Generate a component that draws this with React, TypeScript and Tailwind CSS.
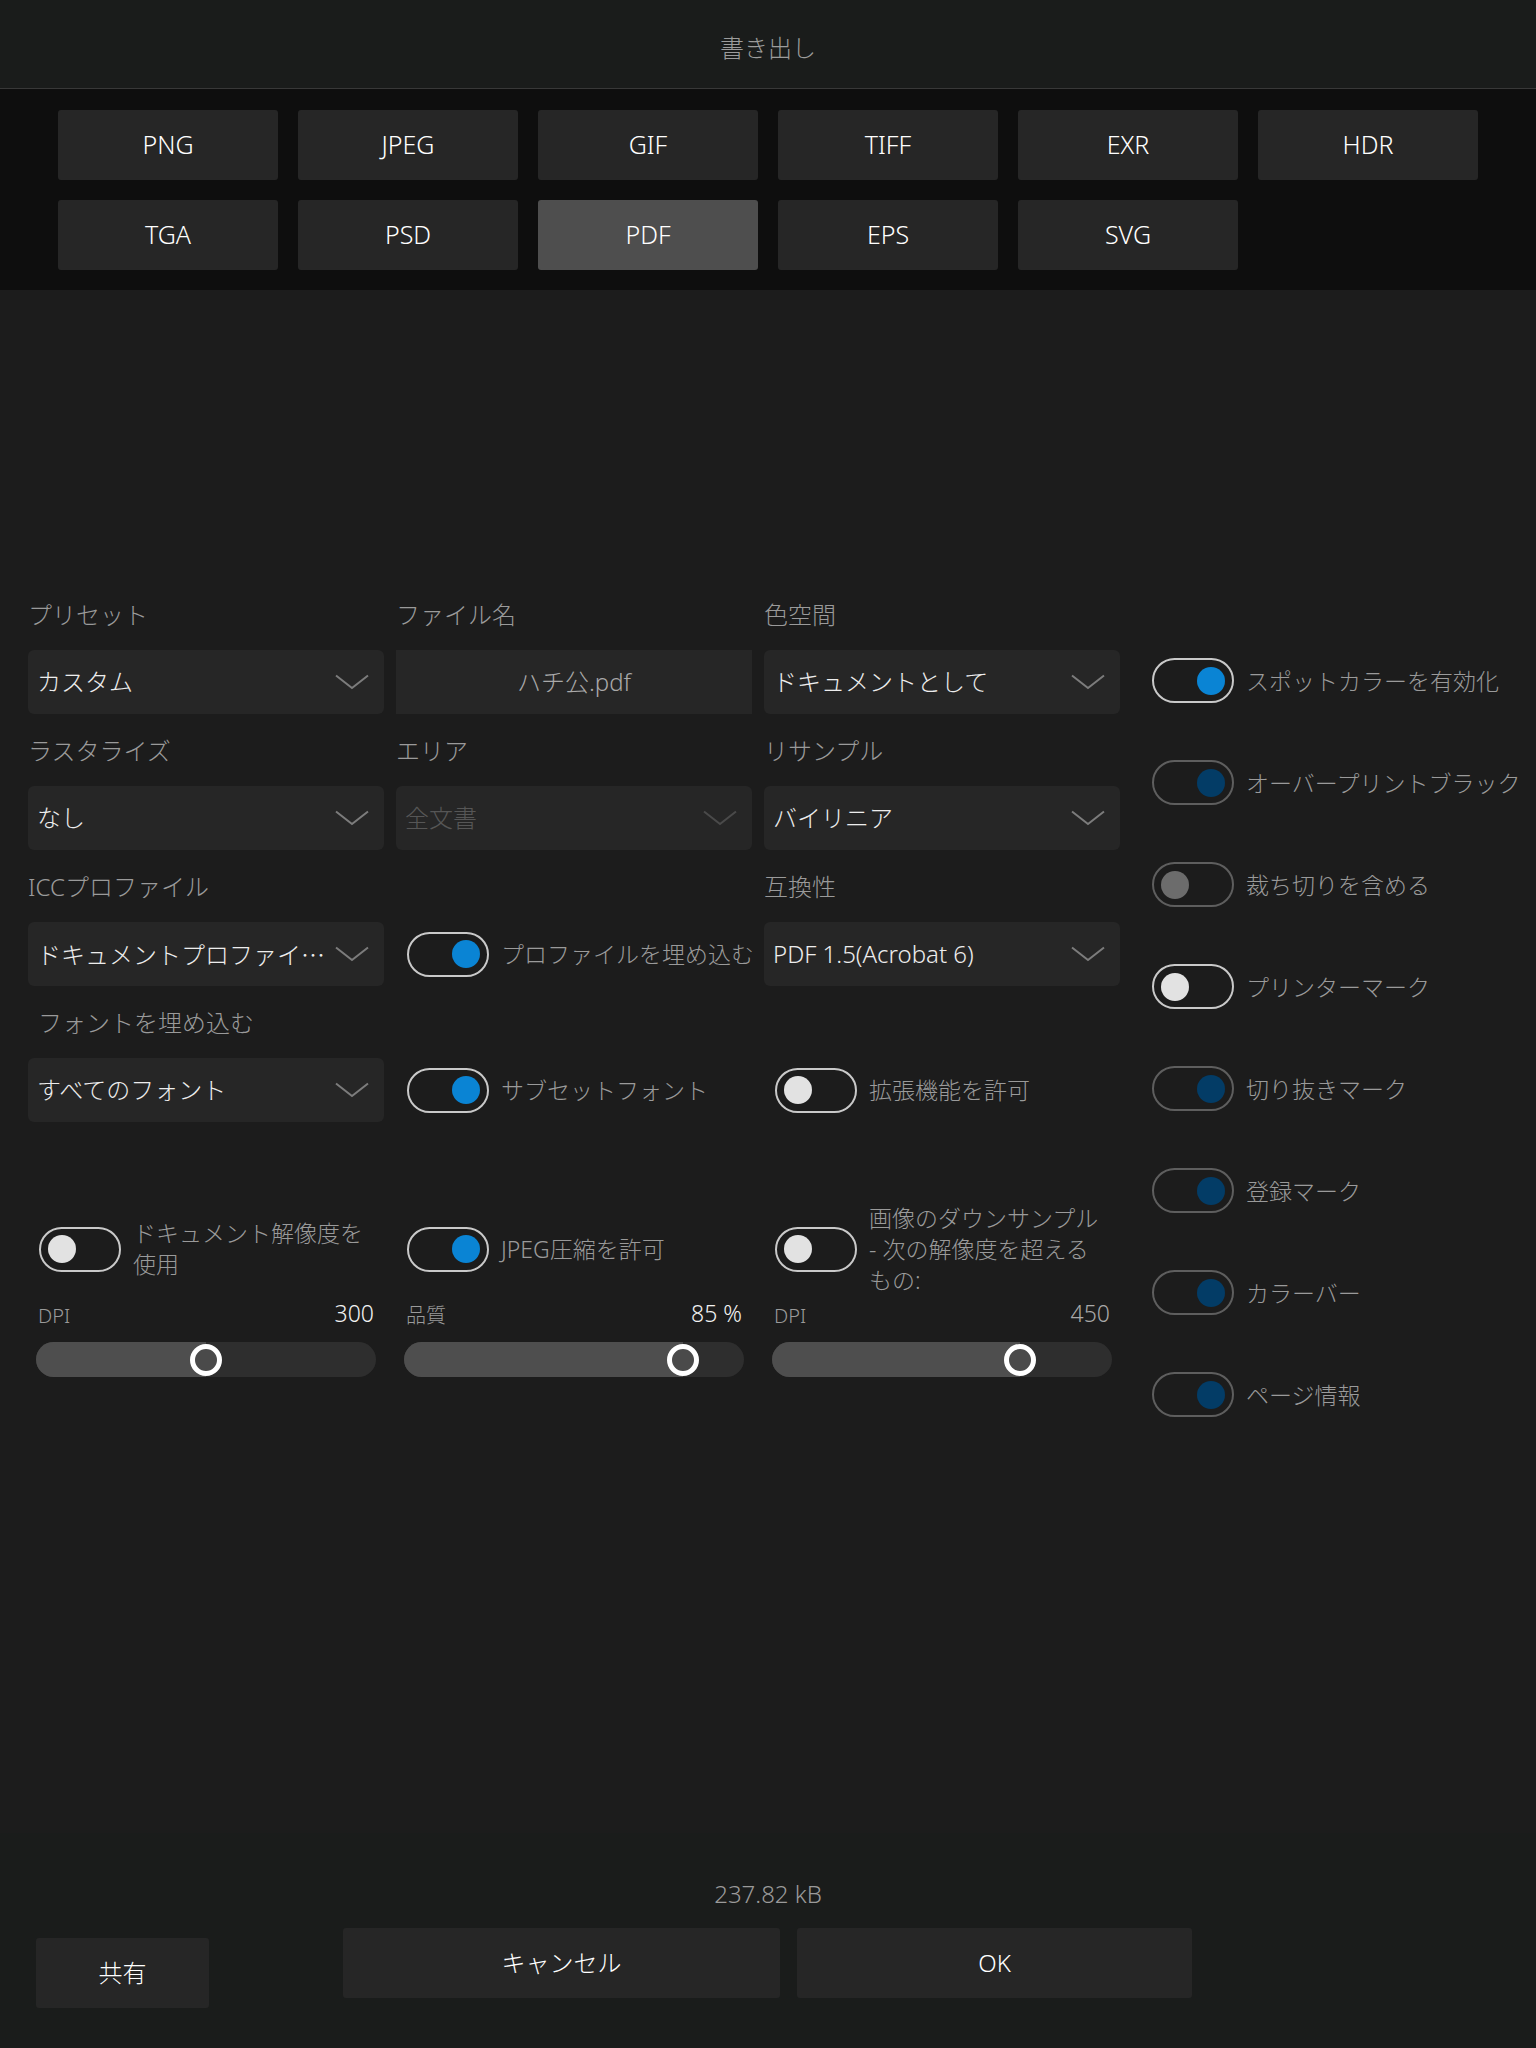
import React from "react";

const formats = ["PNG", "JPEG", "GIF", "TIFF", "EXR", "HDR", "TGA", "PSD", "PDF", "EPS", "SVG"];

// トグルの見た目: on/off と有効/無効
type ToggleState = "on" | "off" | "onDim" | "offDim";

const Toggle = ({ state }: { state: ToggleState }) => {
  const dim = state === "onDim" || state === "offDim";
  const on = state === "on" || state === "onDim";
  const knob =
    state === "on" ? "bg-[#0a84d4]" : state === "onDim" ? "bg-[#033c66]" : state === "off" ? "bg-[#e2e2e2]" : "bg-[#6c6c6c]";
  return (
    <div
      className={`w-[82px] h-[45px] shrink-0 rounded-full border-2 flex items-center px-[7px] ${
        dim ? "border-[#5e5e5e]" : "border-[#c9c9c9]"
      } ${on ? "justify-end" : "justify-start"}`}
    >
      <div className={`w-[28px] h-[28px] rounded-full ${knob}`} />
    </div>
  );
};

const Chevron = ({ dim }: { dim?: boolean }) => (
  <svg width="34" height="16" viewBox="0 0 34 16" fill="none" className="shrink-0">
    <path d="M1 1.5 L17 14 L33 1.5" stroke={dim ? "#4a4a4a" : "#7c7c7c"} strokeWidth="2" />
  </svg>
);

const Label = ({ text, indent }: { text?: string; indent?: boolean }) => (
  <div className={`h-[50px] text-[24px] leading-[30px] text-[#9a9a9a] whitespace-nowrap ${indent ? "pl-[10px]" : ""}`}>
    {text}
  </div>
);

const Select = ({
  label,
  value,
  dim,
  indent,
  clipped,
}: {
  label?: string;
  value: string;
  dim?: boolean;
  indent?: boolean;
  clipped?: boolean;
}) => (
  <div>
    <Label text={label} indent={indent} />
    <div className="h-[64px] rounded-md bg-[#262626] flex items-center justify-between pl-[9px] pr-[15px]">
      <span className={`text-[24px] leading-[32px] whitespace-nowrap ${dim ? "text-[#565656]" : "text-[#ededed]"}`}>
        {value}
        {clipped && <span className="font-['Noto_Sans_CJK_JP',sans-serif]">…</span>}
      </span>
      <Chevron dim={dim} />
    </div>
  </div>
);

const ToggleCell = ({ text, state }: { text: string; state: ToggleState }) => (
  <div>
    <Label />
    <div className="h-[64px] flex items-center pl-[11px]">
      <Toggle state={state} />
      <span className="ml-[12px] text-[23px] leading-[32px] text-[#9a9a9a] whitespace-nowrap">{text}</span>
    </div>
  </div>
);

const SliderCell = ({
  lines,
  state,
  unit,
  value,
  pct,
  bright,
}: {
  lines: string[];
  state: ToggleState;
  unit: string;
  value: string;
  pct: number;
  bright: boolean;
}) => (
  <div>
    <div className="h-[96px] flex items-center pl-[11px]">
      <Toggle state={state} />
      <span className="ml-[12px] text-[23px] leading-[31px] text-[#9a9a9a] whitespace-nowrap">
        {lines.map((l, i) => (
          <React.Fragment key={i}>
            {i > 0 && <br />}
            {l}
          </React.Fragment>
        ))}
      </span>
    </div>
    <div className="h-[36px] flex items-center justify-between px-[10px]">
      <span className="text-[20px] leading-[28px] text-[#9a9a9a] mt-[2px]">{unit}</span>
      <span className={`text-[23px] leading-[30px] -mt-[4px] ${bright ? "text-[#f2f2f2]" : "text-[#a8a8a8]"}`}>{value}</span>
    </div>
    <div className="relative mt-[9px] mx-[8px] h-[35px] rounded-full bg-[#2e2e2e]">
      <div className="absolute left-0 top-0 h-full rounded-l-full bg-[#4e4e4e]" style={{ width: `${pct}%` }} />
      <div
        className="absolute top-1/2 -translate-y-1/2 w-[32px] h-[32px] rounded-full border-[5px] border-white bg-[#4a4a4a]"
        style={{ left: `calc(${pct}% - 16px)` }}
      />
    </div>
  </div>
);

const sideToggles: { text: string; state: ToggleState }[] = [
  { text: "スポットカラーを有効化", state: "on" },
  { text: "オーバープリントブラック", state: "onDim" },
  { text: "裁ち切りを含める", state: "offDim" },
  { text: "プリンターマーク", state: "off" },
  { text: "切り抜きマーク", state: "onDim" },
  { text: "登録マーク", state: "onDim" },
  { text: "カラーバー", state: "onDim" },
  { text: "ページ情報", state: "onDim" },
];

export default function App() {
  return (
    <div className="h-[2048px] w-full flex flex-col bg-[#1c1c1c] font-light font-['Noto_Sans','Noto_Sans_CJK_JP',sans-serif]">
      {/* ヘッダー */}
      <header className="h-[89px] shrink-0 bg-[#1a1c1b] border-b border-[#383838] flex items-center justify-center pt-[8px]">
        <h1 className="text-[24px] leading-[32px] text-[#9c9c9c]">書き出し</h1>
      </header>

      {/* 形式 */}
      <section className="shrink-0 bg-[#0e0e0e] px-[58px] pt-[21px] pb-[20px]">
        <div className="grid grid-cols-[repeat(6,220px)] gap-[20px]">
          {formats.map((f) => (
            <button
              key={f}
              className={`h-[70px] rounded-[3px] text-[25px] text-white ${f === "PDF" ? "bg-[#4e4e4e]" : "bg-[#262626]"}`}
            >
              {f}
            </button>
          ))}
        </div>
      </section>

      {/* 設定 */}
      <main className="flex-1 flex pt-[310px] pl-[28px]">
        <div className="w-[1092px] shrink-0">
          <div className="grid grid-cols-[356px_356px_356px] gap-x-[12px] gap-y-[22px]">
            <Select label="プリセット" value="カスタム" />
            <div>
              <Label text="ファイル名" />
              <div className="h-[64px] bg-[#262626] flex items-center justify-center">
                <span className="text-[24px] leading-[32px] text-[#a9a9a9]">ハチ公.pdf</span>
              </div>
            </div>
            <Select label="色空間" value="ドキュメントとして" />

            <Select label="ラスタライズ" value="なし" />
            <Select label="エリア" value="全文書" dim />
            <Select label="リサンプル" value="バイリニア" />

            <Select label="ICCプロファイル" value="ドキュメントプロファイ" clipped />
            <ToggleCell text="プロファイルを埋め込む" state="on" />
            <Select label="互換性" value="PDF 1.5(Acrobat 6)" />

            <Select label="フォントを埋め込む" value="すべてのフォント" indent />
            <ToggleCell text="サブセットフォント" state="on" />
            <ToggleCell text="拡張機能を許可" state="off" />
          </div>

          <div className="grid grid-cols-[356px_356px_356px] gap-x-[12px] mt-[79px]">
            <SliderCell lines={["ドキュメント解像度を", "使用"]} state="off" unit="DPI" value="300" pct={50} bright />
            <SliderCell lines={["JPEG圧縮を許可"]} state="on" unit="品質" value="85 %" pct={82} bright />
            <SliderCell
              lines={["画像のダウンサンプル", "- 次の解像度を超える", "もの:"]}
              state="off"
              unit="DPI"
              value="450"
              pct={73}
              bright={false}
            />
          </div>
        </div>

        <div className="ml-[32px] pt-[58px] flex flex-col gap-[57px]">
          {sideToggles.map((t) => (
            <div key={t.text} className="flex items-center">
              <Toggle state={t.state} />
              <span className="ml-[12px] text-[23px] leading-[32px] text-[#9a9a9a] whitespace-nowrap">{t.text}</span>
            </div>
          ))}
        </div>
      </main>

      {/* フッター */}
      <footer className="h-[215px] shrink-0 bg-[#1a1c1b] pt-[45px]">
        <p className="text-center text-[24px] leading-[32px] text-[#9a9a9a]">237.82 kB</p>
        <div className="flex items-start pl-[36px] mt-[18px]">
          <button className="mt-[10px] w-[173px] h-[70px] rounded-[3px] bg-[#262626] text-[24px] text-white">共有</button>
          <button className="ml-[134px] w-[437px] h-[70px] rounded-[3px] bg-[#262626] text-[24px] text-white">キャンセル</button>
          <button className="ml-[17px] w-[395px] h-[70px] rounded-[3px] bg-[#262626] text-[24px] text-white">OK</button>
        </div>
      </footer>
    </div>
  );
}
